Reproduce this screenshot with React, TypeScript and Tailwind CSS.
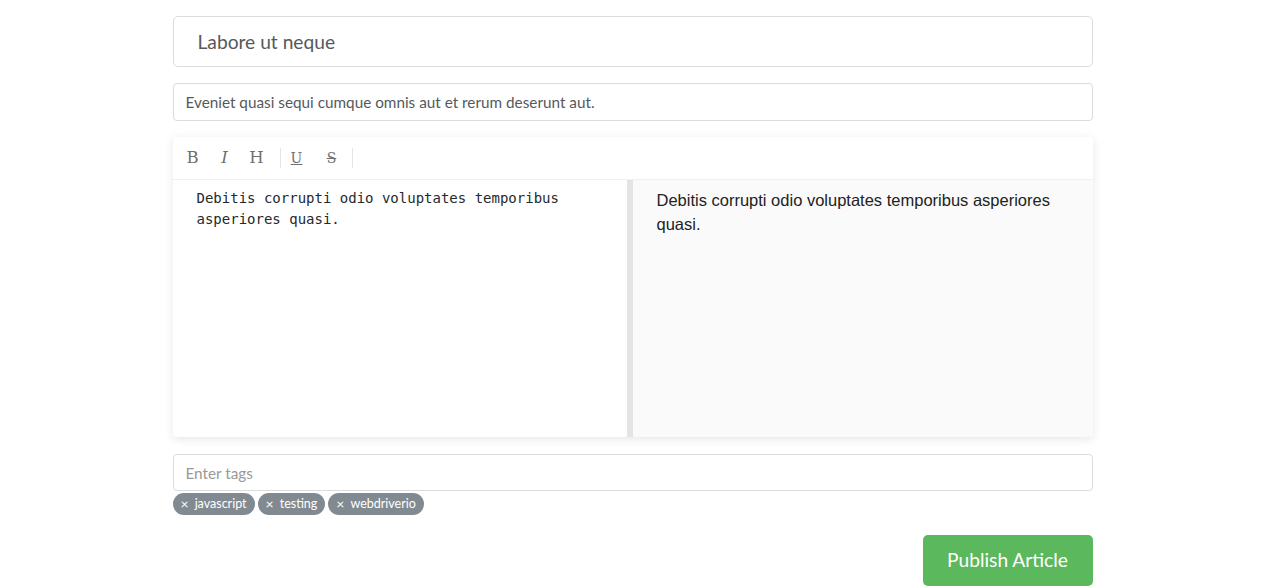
const tags = ["javascript", "testing", "webdriverio"];

const App = () => {
  return (
    <div className="min-h-[586px] bg-white font-['Lato',sans-serif] text-[#55595c]">
      <div className="mx-auto w-[920px] pt-4">
        <input
          className="h-[51px] w-full rounded-[5px] border border-[#dcdcdc] px-6 text-[19.2px] text-[#55595c] outline-none"
          defaultValue="Labore ut neque"
        />
        <input
          className="mt-4 h-[38px] w-full rounded-[4px] border border-[#dcdcdc] px-3 text-[15.3px] text-[#55595c] outline-none"
          defaultValue="Eveniet quasi sequi cumque omnis aut et rerum deserunt aut."
        />

        <div className="mt-4 flex h-[300px] flex-col rounded-[3px] bg-white shadow-[0_2px_10px_rgba(0,0,0,0.1)]">
          <div className="flex h-[43px] items-center border-b border-[#f1f1f1] pl-[4px] font-['DejaVu_Serif',serif] text-[16.5px] text-[#707070]">
            <span className="w-8 text-center">B</span>
            <span className="w-8 text-center italic">I</span>
            <span className="w-8 text-center">H</span>
            <span className="ml-[7px] h-5 w-px bg-[#e5e5e5]" />
            <span className="w-8 text-center text-[14px] underline">U</span>
            <span className="ml-[3px] w-8 text-center text-[14px] line-through">S</span>
            <span className="ml-[4px] h-5 w-px bg-[#e5e5e5]" />
          </div>
          <div className="flex flex-1">
            <div className="w-[454px] px-6 py-[8px] font-['DejaVu_Sans_Mono',monospace] text-[14px] leading-[21px] text-[#24292e]">
              Debitis corrupti odio voluptates temporibus asperiores quasi.
            </div>
            <div className="w-[6px] bg-[#e4e4e4]" />
            <div className="flex-1 rounded-br-[3px] bg-[#fafafa] px-6 py-[8px] font-['Liberation_Sans',sans-serif] text-[16.5px] leading-[24px] text-[#222]">
              Debitis corrupti odio voluptates temporibus asperiores quasi.
            </div>
          </div>
        </div>

        <input
          className="mt-[17px] h-[37px] w-full rounded-[4px] border border-[#dcdcdc] px-3 text-[15.3px] text-[#55595c] outline-none placeholder:text-[#999]"
          placeholder="Enter tags"
        />
        <div className="mt-[2px] flex gap-[3px]">
          {tags.map((t) => (
            <span
              key={t}
              className="flex h-[22px] items-center gap-[6px] rounded-full bg-[#818a91] px-[8px] text-[12.5px] text-white"
            >
              <span className="text-[14px] leading-none">×</span>
              {t}
            </span>
          ))}
        </div>

        <div className="mt-5 flex justify-end">
          <button className="h-[51px] w-[170px] rounded-[5px] bg-[#5cb85c] text-[19.2px] text-white">
            Publish Article
          </button>
        </div>
      </div>
    </div>
  );
};

export default App;
